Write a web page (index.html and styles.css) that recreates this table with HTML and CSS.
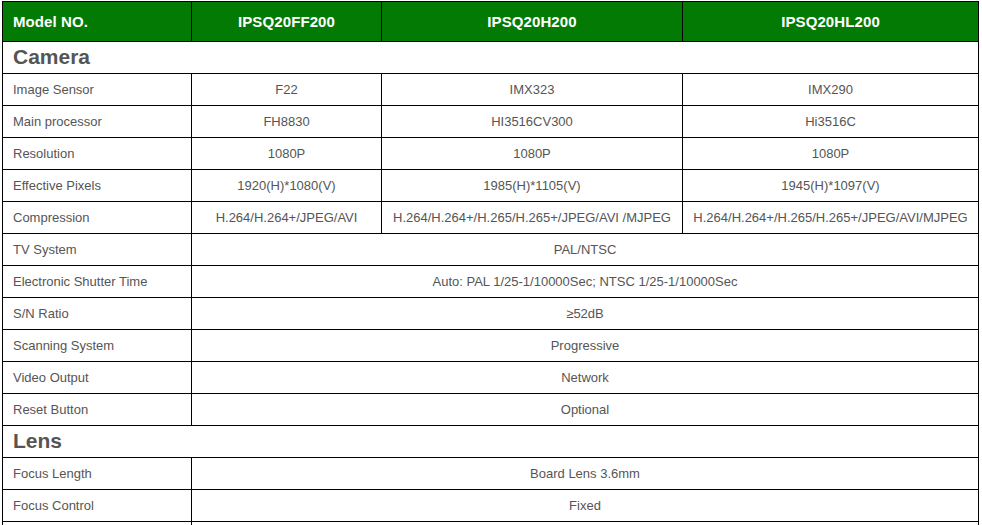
FILE: index.html
```html
<!DOCTYPE html>
<html>
<head>
<meta charset="utf-8">
<link rel="stylesheet" href="styles.css">
</head>
<body>
<table class="spec">
  <colgroup>
    <col class="c1"><col class="c2"><col class="c3"><col class="c4">
  </colgroup>
  <thead>
    <tr class="head">
      <th class="first">Model NO.</th>
      <th>IPSQ20FF200</th>
      <th>IPSQ20H200</th>
      <th>IPSQ20HL200</th>
    </tr>
  </thead>
  <tbody>
    <tr class="section"><td colspan="4">Camera</td></tr>
    <tr><td class="label">Image Sensor</td><td>F22</td><td>IMX323</td><td>IMX290</td></tr>
    <tr><td class="label">Main processor</td><td>FH8830</td><td>HI3516CV300</td><td>Hi3516C</td></tr>
    <tr><td class="label">Resolution</td><td>1080P</td><td>1080P</td><td>1080P</td></tr>
    <tr><td class="label">Effective Pixels</td><td>1920(H)*1080(V)</td><td>1985(H)*1105(V)</td><td>1945(H)*1097(V)</td></tr>
    <tr><td class="label">Compression</td><td>H.264/H.264+/JPEG/AVI</td><td>H.264/H.264+/H.265/H.265+/JPEG/AVI /MJPEG</td><td>H.264/H.264+/H.265/H.265+/JPEG/AVI/MJPEG</td></tr>
    <tr><td class="label">TV System</td><td colspan="3">PAL/NTSC</td></tr>
    <tr><td class="label">Electronic Shutter Time</td><td colspan="3">Auto: PAL 1/25-1/10000Sec; NTSC 1/25-1/10000Sec</td></tr>
    <tr><td class="label">S/N Ratio</td><td colspan="3">≥52dB</td></tr>
    <tr><td class="label">Scanning System</td><td colspan="3">Progressive</td></tr>
    <tr><td class="label">Video Output</td><td colspan="3">Network</td></tr>
    <tr><td class="label">Reset Button</td><td colspan="3">Optional</td></tr>
    <tr class="section"><td colspan="4">Lens</td></tr>
    <tr><td class="label">Focus Length</td><td colspan="3">Board Lens 3.6mm</td></tr>
    <tr><td class="label">Focus Control</td><td colspan="3">Fixed</td></tr>
    <tr><td class="label"></td><td colspan="3"></td></tr>
  </tbody>
</table>
</body>
</html>
```
FILE: styles.css
```css
html, body {
  margin: 0;
  padding: 0;
  background: #ffffff;
}
body {
  padding: 1px 0 0 2px;
  font-family: "Liberation Sans", Arial, sans-serif;
}
.spec {
  border-collapse: collapse;
  table-layout: fixed;
  width: 976px;
}
.c1 { width: 189px; }
.c2 { width: 190px; }
.c3 { width: 301px; }
.c4 { width: 296px; }
.spec th,
.spec td {
  border: 1px solid #000;
  padding: 0 10px 1px;
  text-align: center;
  white-space: nowrap;
  overflow: hidden;
}
.head th {
  background: #037a03;
  color: #ffffff;
  font-size: 15px;
  font-weight: bold;
  height: 38px;
  letter-spacing: 0.1px;
}
.head th.first {
  text-align: left;
}
.spec td {
  height: 30px;
  font-size: 13px;
  color: #555555;
}
.spec td.label {
  text-align: left;
}
.section td {
  text-align: left;
  font-size: 21px;
  font-weight: bold;
  color: #555555;
}
```
